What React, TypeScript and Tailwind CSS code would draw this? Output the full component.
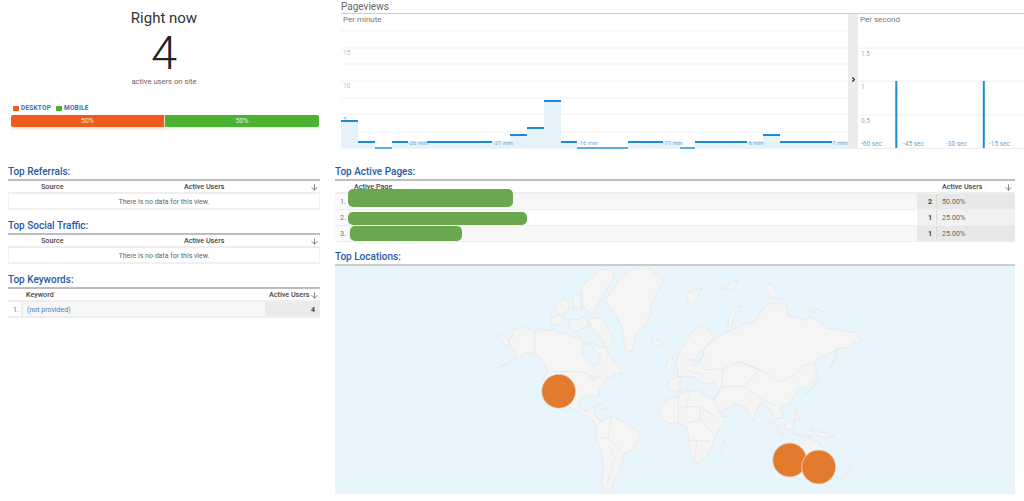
import { ArrowDown, ChevronRight } from "lucide-react";

const steps: [number, number, number][] = [
  [341, 358, 121],
  [358, 375, 142],
  [375, 392, 148],
  [392, 408, 142],
  [427, 492, 142],
  [510, 527, 135],
  [527, 544, 128],
  [544, 561, 101],
  [561, 577, 142],
  [577, 628, 148],
  [628, 663, 142],
  [680, 695, 148],
  [695, 747, 142],
  [763, 780, 135],
  [780, 832, 142],
];

const minuteLabels: [number, string][] = [
  [408, "-26 min"],
  [493, "-21 min"],
  [578, "-16 min"],
  [663, "-11 min"],
  [747, "-6 min"],
  [831, "-1 min"],
];

function MinuteChart() {
  return (
    <svg viewBox="341 14 507 135" className="w-[507px] h-[135px] shrink-0">
      <text x="343" y="22" fontSize="8" fill="#777">Per minute</text>
      {[31, 48, 64, 81, 98, 114, 132].map((y) => (
        <line key={y} x1="341" x2="848" y1={y} y2={y} stroke="#f2f2f2" />
      ))}
      <text x="343" y="55" fontSize="6.5" fill="#bbb">15</text>
      <text x="343" y="88" fontSize="6.5" fill="#bbb">10</text>
      <text x="343" y="122" fontSize="6.5" fill="#bbb">5</text>
      {steps.map(([x1, x2, y]) => (
        <g key={x1}>
          <rect x={x1} y={y} width={x2 - x1} height={148.5 - y} fill="#e6f2fa" />
          <rect x={x1} y={y - 1} width={x2 - x1} height="2" fill={y === 148 ? "#5aaee0" : "#1b8bd3"} />
        </g>
      ))}
      <rect x="408" y="141" width="19" height="8" fill="#e6f2fa" />
      <rect x="492" y="141" width="18" height="8" fill="#e6f2fa" />
      <rect x="663" y="141" width="17" height="8" fill="#e6f2fa" />
      <rect x="747" y="141" width="16" height="8" fill="#e6f2fa" />
      <rect x="832" y="141" width="16" height="8" fill="#e6f2fa" />
      {minuteLabels.map(([x, label]) => (
        <text key={label} x={x} y="145" fontSize="6" fill="#6aa5d6">{label}</text>
      ))}
    </svg>
  );
}

function SecondChart() {
  return (
    <svg viewBox="858 14 166 135" className="w-[166px] h-[135px] shrink-0">
      <text x="860" y="22" fontSize="8" fill="#777">Per second</text>
      {[48, 81, 115].map((y) => (
        <line key={y} x1="858" x2="1024" y1={y} y2={y} stroke="#f0f0f0" />
      ))}
      <line x1="858" x2="1024" y1="148.5" y2="148.5" stroke="#eeeeee" />
      <text x="861" y="56" fontSize="6.5" fill="#aaa">1.5</text>
      <text x="861" y="89" fontSize="6.5" fill="#aaa">1</text>
      <text x="861" y="123" fontSize="6.5" fill="#aaa">0.5</text>
      <rect x="895.3" y="81" width="2" height="67" fill="#1b8bd3" />
      <rect x="982.8" y="81" width="2" height="67" fill="#1b8bd3" />
      <text x="861" y="146" fontSize="6.5" fill="#6aa5d6">-60 sec</text>
      <text x="903" y="146" fontSize="6.5" fill="#6aa5d6">-45 sec</text>
      <text x="946" y="146" fontSize="6.5" fill="#6aa5d6">-30 sec</text>
      <text x="989" y="146" fontSize="6.5" fill="#6aa5d6">-15 sec</text>
    </svg>
  );
}

function WorldMap() {
  return (
    <svg viewBox="335 266 680 228" className="w-[680px] h-[228px] block bg-[#e8f5fc]">
      <g transform="translate(335 260) scale(0.3333)" fill="#f5f5f5" stroke="#e3e3e3" strokeWidth="2" strokeLinejoin="round">
        {/* North America */}
        <path d="M487 222 L497 218 L505 228 L520 240 L528 258 L522 243 L533 226 L530 212 L548 204 L562 197 L585 207 L600 215 L618 208 L640 212 L655 206 L672 222 L695 218 L712 232 L728 228 L745 250 L768 246 L792 262 L808 262 L818 275 L832 298 L850 318 L862 343 L845 340 L826 352 L815 348 L808 365 L795 385 L792 405 L780 412 L770 404 L752 408 L735 415 L730 432 L742 450 L760 455 L768 442 L782 442 L775 462 L790 478 L802 482 L782 498 L775 480 L745 462 L720 448 L700 440 L670 405 L640 375 L625 355 L640 335 L625 305 L610 288 L590 278 L572 278 L545 295 L520 312 L490 322 L520 308 L545 285 L528 262 L510 256 L500 240 Z" />
        <path d="M745 255 L768 250 L778 268 L795 285 L795 310 L775 320 L755 300 L742 278 Z" fill="#e8f5fc" />
        <path d="M600 215 L600 285 M640 335 L745 335 L770 350 L800 352" fill="none" />
        <path d="M760 345 L785 352 L778 362 L758 356 Z" fill="#e8f5fc" />
        {/* arctic islands */}
        <path d="M745 120 L738 95 L752 65 L772 55 L790 32 L812 28 L835 35 L838 52 L826 72 L805 100 L792 130 L772 165 L755 150 L742 135 Z" />
        <path d="M660 140 L676 128 L690 112 L702 130 L702 150 L688 158 L672 165 Z" />
        <path d="M650 170 L670 166 L690 172 L682 185 L680 197 L662 192 L650 195 Z" />
        <path d="M702 178 L725 180 L750 170 L762 200 L742 205 L722 215 L702 200 Z" />
        <path d="M762 180 L780 172 L800 175 L815 200 L836 240 L826 252 L815 262 L802 240 L790 225 L770 205 Z" />
        <path d="M712 110 L735 100 L740 145 L722 140 L715 150 Z" />
        {/* greenland, iceland */}
        <path d="M808 120 L830 95 L850 62 L880 30 L905 26 L930 18 L955 35 L985 65 L968 95 L950 130 L945 165 L935 190 L912 212 L900 232 L890 275 L870 270 L866 235 L860 200 L845 170 L830 150 Z" />
        <path d="M950 245 L975 238 L980 252 L960 258 Z" />
        <path d="M780 430 L800 436 L825 446 L800 447 Z" />
        {/* south america */}
        <path d="M782 498 L805 480 L830 468 L850 478 L870 490 L895 505 L917 520 L905 545 L890 570 L865 585 L860 605 L850 640 L835 665 L825 697 L805 680 L800 660 L806 620 L800 580 L782 530 Z" />
        <path d="M820 535 L860 575 M822 570 L845 600 M835 605 L815 680 M782 530 L820 535 L830 468" fill="none" />
        {/* west africa and europe edge */}
        <path d="M1035 410 L1010 414 L992 422 L970 460 L985 480 L1000 490 L1035 488 Z" />
        <path d="M992 320 L1000 300 L1012 290 L1020 328 L1002 332 Z" />
        <path d="M1000 365 L1035 345 L1035 395 L1020 392 L1000 390 Z" />
      </g>
      <g transform="translate(680 260) scale(0.3333)" fill="#f5f5f5" stroke="#e3e3e3" strokeWidth="2" strokeLinejoin="round">
        {/* africa */}
        <path d="M-5 400 L30 392 L60 395 L80 410 L105 420 L115 445 L125 470 L142 468 L125 495 L105 530 L95 560 L80 590 L62 600 L45 612 L35 590 L30 560 L20 500 L-5 490 Z" />
        <path d="M-5 445 L20 440 L60 440 L62 480 L20 490 M60 440 L105 470 M62 480 L100 520 M30 540 L90 545 M50 545 L45 605 M30 392 L20 440" fill="none" />
        <path d="M118 578 L126 552 L135 540 L130 575 Z" />
        {/* eurasia */}
        <path d="M-5 350 L-10 300 L0 272 L22 238 L40 212 L60 198 L75 200 L105 235 L88 248 L78 262 L95 240 L110 235 L130 220 L170 205 L198 190 L230 185 L236 168 L240 155 L270 130 L298 128 L320 135 L325 170 L345 172 L370 180 L395 172 L410 180 L440 205 L470 208 L500 215 L525 215 L542 247 L525 248 L510 260 L478 265 L470 270 L440 285 L415 295 L400 310 L412 340 L398 360 L382 385 L362 380 L350 390 L342 410 L330 432 L300 440 L312 472 L285 476 L272 450 L265 440 L245 425 L230 450 L220 482 L205 460 L195 440 L160 430 L155 440 L118 455 L100 420 L120 395 L100 365 L80 372 L60 365 L40 350 L10 350 Z" />
        <path d="M38 310 L55 280 L68 268 L72 290 L60 300 L48 320 Z" fill="#e8f5fc" />
        <path d="M75 262 L60 300 L75 330 L130 325 L180 305 L240 330 L300 365 L345 345 L370 315 L405 310 M130 325 L125 380 L190 380 L250 420 M180 305 L240 330 L190 380 M10 300 L60 300 M20 330 L70 345 M250 420 L290 440 M125 380 L100 420" fill="none" />
        {/* islands */}
        <path d="M470 268 L462 300 L450 327 L472 290 Z" />
        <path d="M415 350 L402 378 L375 402 L392 390 L414 370 Z" />
        <path d="M20 100 L45 90 L65 85 L55 108 L40 135 L25 125 Z" />
        <path d="M122 85 L148 75 L175 60 L160 90 L140 88 Z" />
        <path d="M255 75 L275 70 L290 100 L300 118 L270 110 Z" />
        <path d="M142 200 L150 160 L170 145 L190 135 L160 170 L155 200 Z" />
        <path d="M388 152 L410 148 L430 155 L410 162 Z" />
        <path d="M270 485 L300 520 L310 525 L285 490 Z" />
        <path d="M312 495 L340 482 L342 505 L320 510 Z" />
        <path d="M340 520 L400 530 L360 530 Z" />
        <path d="M392 510 L440 520 L465 532 L420 530 Z" />
        <path d="M342 450 L360 475 L345 480 Z" />
        {/* australia, new zealand */}
        <path d="M350 570 L362 550 L385 535 L415 545 L435 580 L450 625 L420 665 L330 650 Z" />
        <path d="M482 657 L515 620 L505 645 Z" />
      </g>
      {[[558.7, 391.3], [789.7, 460], [818.7, 467]].map(([cx, cy]) => (
        <circle key={cx} cx={cx} cy={cy} r="17" fill="#e37b2e" stroke="#e2d9d0" strokeWidth="0.8" />
      ))}
    </svg>
  );
}

function SectionTitle({ children }: { children: string }) {
  return <h3 className="h-[14px] text-[10px] leading-[14px] font-medium text-[#1f5ba8]">{children}</h3>;
}

function SortArrow() {
  return <ArrowDown size={9} strokeWidth={2.5} className="text-[#777] absolute right-[1px] top-[2px]" />;
}

function EmptyTable({ title }: { title: string }) {
  return (
    <div>
      <SectionTitle>{title}</SectionTitle>
      <div className="border-t-2 border-[#bdbdbd]">
        <div className="relative h-[13px] border-b-2 border-[#eeeeee] text-[7.2px] leading-[11px] font-medium text-[#444]">
          <span className="absolute left-[33px]">Source</span>
          <span className="absolute left-[176px]">Active Users</span>
          <SortArrow />
        </div>
        <div className="h-[16px] border-b-2 border-x border-[#f0f0f0] text-center text-[7px] leading-[16px] text-[#666]">
          There is no data for this view.
        </div>
      </div>
    </div>
  );
}

const pages = [
  { n: "1.", users: 2, pct: "50.00%", row: "bg-[#f7f7f7]", cell: "bg-[#e8e8e8]" },
  { n: "2.", users: 1, pct: "25.00%", row: "bg-white", cell: "bg-[#f1f1f1]" },
  { n: "3.", users: 1, pct: "25.00%", row: "bg-[#f7f7f7]", cell: "bg-[#e8e8e8]" },
];

export default function App() {
  return (
    <div className="w-[1024px] h-[501px] overflow-hidden bg-white flex font-[Roboto,sans-serif]">
      {/* left column */}
      <div className="w-[312px] ml-2 shrink-0">
        <div className="h-[165px]">
          <div className="flex flex-col items-center">
            <div className="mt-[9px] text-[15px] leading-[18px] text-[#333]">Right now</div>
            <div className="mt-[7px] text-[47px] leading-[38px] font-light text-[#222]">4</div>
            <div className="mt-[5px] text-[7.6px] leading-[10px] text-[#666]">active users on site</div>
          </div>
          <div className="mt-[17px] ml-[5px] flex items-center text-[6.5px] leading-[8px] font-bold text-[#3a6fb0]">
            <span className="w-[6px] h-[5px] bg-[#f05a1c] mr-[2px]" />
            <span className="mr-[5px] tracking-[0.2px]">DESKTOP</span>
            <span className="w-[6px] h-[5px] bg-[#4cb232] mr-[2px]" />
            <span className="tracking-[0.2px]">MOBILE</span>
          </div>
          <div className="mt-[3px] ml-[3px] w-[308px] h-[12px] flex rounded-[2px] overflow-hidden text-[7px] leading-[12px] text-center text-[#e8e8e8]">
            <div className="w-1/2 bg-[#f05a1c] border-r border-[#f3d9c9]">50%</div>
            <div className="w-1/2 bg-[#4cb232]">50%</div>
          </div>
          <div className="ml-[3px] w-[308px] h-[4px] flex">
            <div className="w-1/2 bg-gradient-to-b from-[#fcdccf] to-white" />
            <div className="w-1/2 bg-gradient-to-b from-[#dff2d9] to-white" />
          </div>
        </div>
        <div className="flex flex-col gap-[9px]">
          <EmptyTable title="Top Referrals:" />
          <EmptyTable title="Top Social Traffic:" />
          <div>
            <SectionTitle>Top Keywords:</SectionTitle>
            <div className="border-t-2 border-[#bdbdbd]">
              <div className="relative h-[13px] border-b-2 border-[#eeeeee] text-[7.2px] leading-[11px] font-medium text-[#444]">
                <span className="absolute left-[18px]">Keyword</span>
                <span className="absolute left-[261px]">Active Users</span>
                <SortArrow />
              </div>
              <div className="h-[16px] flex border-b-2 border-[#eeeeee] text-[7px] leading-[16px] bg-[#f7f7f7]">
                <span className="w-[15px] pl-[5px] border-r-2 border-[#eeeeee] bg-white text-[#777]">1.</span>
                <span className="flex-1 pl-1 text-[#4d7fb8]">(not provided)</span>
                <span className="w-[55px] pr-[5px] text-right font-bold text-[#444] bg-[#ebebeb]">4</span>
              </div>
            </div>
          </div>
        </div>
      </div>

      {/* right column */}
      <div className="ml-[15px] w-[689px] shrink-0">
        <div className="h-[165px] pl-[6px]">
          <div className="h-[14px] pt-[1px] border-b border-[#cccccc] text-[10px] leading-[12px] text-[#666]">Pageviews</div>
          <div className="flex">
            <MinuteChart />
            <div className="w-[10px] h-[135px] shrink-0 bg-[#ececec] flex justify-center pt-[62px]">
              <ChevronRight size={7} strokeWidth={4} className="text-[#222]" />
            </div>
            <SecondChart />
          </div>
        </div>
        <div className="w-[680px]">
          <SectionTitle>Top Active Pages:</SectionTitle>
          <div className="relative border-t-2 border-[#bdbdbd]">
            <div className="relative h-[13px] border-b-2 border-[#eeeeee] text-[7.2px] leading-[11px] font-medium text-[#444]">
              <span className="absolute left-[19px]">Active Page</span>
              <span className="absolute left-[607px]">Active Users</span>
              <ArrowDown size={9} strokeWidth={2.5} className="text-[#777] absolute right-[2px] top-[2px]" />
            </div>
            {pages.map((p) => (
              <div key={p.n} className={`h-[16px] flex border-b border-[#eeeeee] text-[7.2px] leading-[16px] ${p.row}`}>
                <span className="w-[15px] pl-[5px] border-r border-[#eeeeee] bg-[#fafafa] text-[#777]">{p.n}</span>
                <span className="w-[567px]" />
                <span className={`w-[20px] pr-[4px] text-right font-bold text-[#444] ${p.cell} border-r border-[#dddddd]`}>{p.users}</span>
                <span className={`flex-1 pl-[5px] text-[#666] ${p.cell}`}>{p.pct}</span>
              </div>
            ))}
            {/* green marks painted over the page paths */}
            <div className="absolute left-[13px] top-[8px] w-[165px] h-[18px] rounded-[5px] bg-[#6aa84f]" />
            <div className="absolute left-[13px] top-[31px] w-[179px] h-[13px] rounded-[5px] bg-[#6aa84f]" />
            <div className="absolute left-[15px] top-[45px] w-[112px] h-[15px] rounded-[5px] bg-[#6aa84f]" />
          </div>
          <div className="mt-[8px]">
            <SectionTitle>Top Locations:</SectionTitle>
            <div className="border-t-2 border-[#cccccc]">
              <WorldMap />
            </div>
          </div>
        </div>
      </div>
    </div>
  );
}
